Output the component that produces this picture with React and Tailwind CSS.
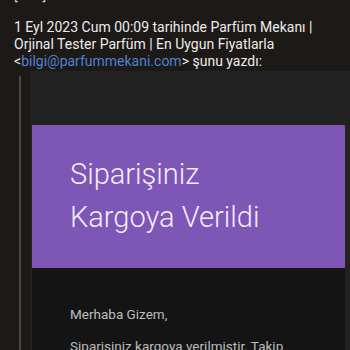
import React from "react";

const App = () => {
  return (
    <div className="w-[350px] h-[350px] overflow-hidden bg-[#1c1917] text-[#ececec]" style={{ fontFamily: "Roboto, 'Noto Sans', sans-serif" }}>
      {/* clipped previous line */}
      <div className="h-[4px] overflow-hidden relative">
        <div className="absolute bottom-0 left-[14px] text-[14px] leading-[17px] text-[#cfcfcf]">[ · · · ]</div>
      </div>

      <div className="pl-[14px] pr-2 pt-[15px] text-[14px] leading-[17px] text-[#ececec]">
        1 Eyl 2023 Cum 00:09 tarihinde Parfüm Mekanı | Orjinal Tester Parfüm | En Uygun Fiyatlarla{" "}
        &lt;<span className="text-[#4f82d6]">bilgi@parfummekani.com</span>&gt; şunu yazdı:
      </div>

      <div className="flex mt-[1px] ml-[19px]">
        <div className="w-[2px] mt-[5px] bg-[#4a4847] shrink-0" />
        <div className="flex-1 ml-[9px] bg-[#222222] pt-[54px]">
          <div className="mr-[5px] ml-[2px] bg-[#7e56b6] pt-[28px] pb-[29px] pl-[38px]">
            <h1 className="text-[29px] leading-[43px] font-light text-[#f3ecfa]">
              Siparişiniz
              <br />
              Kargoya Verildi
            </h1>
          </div>
          <div className="ml-[2px] mr-[5px] bg-[#141414] pt-[38px] pl-[38px] pb-8 text-[13.5px] leading-[17px] text-[#bdbdbd]">
            <p>Merhaba Gizem,</p>
            <p className="mt-[15px]">Siparisiniz kargoya verilmistir. Takip</p>
          </div>
        </div>
      </div>
    </div>
  );
};

export default App;
